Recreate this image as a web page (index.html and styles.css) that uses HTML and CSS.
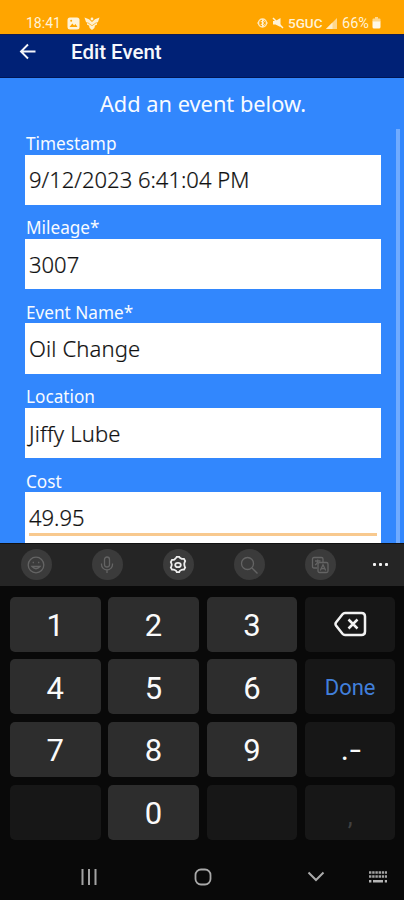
FILE: index.html
```html
<!DOCTYPE html>
<html lang="en">
<head>
<meta charset="utf-8">
<title>Edit Event</title>
<link rel="stylesheet" href="styles.css">
</head>
<body>
<div class="status">
  <div class="status-left">
    <span class="clock">18:41</span>
    <svg class="pic" width="13" height="13" viewBox="0 0 13 13"><rect x=".5" y=".5" width="12" height="12" rx="2.5" fill="#fff3d8"/><path d="M2.5 10l2.8-3.5 1.8 2 1.4-1.5 2 3z" fill="#ffa500"/><circle cx="4.2" cy="3.8" r="1" fill="#ffa500"/></svg>
    <svg class="bird" width="16" height="13" viewBox="0 0 16 13"><path d="M.5.5L5 2.300 8 5l3-2.700L15.500.5 14 5l-1.300.8.3 2-2 .8-.6 2.500L8 13l-2.400-1.900L5 8.600l-2-.8.300-2L2 5z" fill="#fff0cf"/><path d="M3.500 5.500L8 8.700l4.500-3.200" fill="none" stroke="#ffa500" stroke-width=".7"/><circle cx="8" cy="2" r="1.400" fill="#fff0cf"/></svg>
  </div>
  <div class="status-right">
    <svg width="11" height="12" viewBox="0 0 11 12"><circle cx="5.500" cy="6" r="4" fill="none" stroke="#ffe8bb" stroke-width="1.500"/><path d="M3.800 4l3.600 3.800-1.900 1.700v-7l1.900 1.700L3.800 8M.3 6h1M9.700 6h1" fill="none" stroke="#fff3d8"/></svg>
    <svg class="mute" width="12" height="12" viewBox="0 0 12 12"><path d="M1 4h2.500L8.500 1v9L3.500 7.500H1z" fill="#fff3d8"/><path d="M1 1l10 10" stroke="#fff3d8" stroke-width="1.500"/></svg>
    <span class="net">5GUC</span>
    <svg class="signal" width="12" height="11" viewBox="0 0 12 11"><path d="M0 11L11 0v11z" fill="#ffd78a"/><path d="M0 11l6.500-6.500V11z" fill="#ffedc8"/></svg>
    <span class="pct">66%</span>
    <svg class="battery" width="9" height="12" viewBox="0 0 9 12"><path d="M3 0h3v1.500h1.500q1 0 1 1V5h-8V2.500q0-1 1-1H3z" fill="#ffd88f"/><path d="M.5 4.500h8V10q0 1.500-1.500 1.500H2Q.5 11.500.5 10z" fill="#fff8e8"/></svg>
  </div>
</div>
<header class="appbar">
  <svg width="18" height="18" viewBox="0 0 18 18"><path d="M16.500 8.500H2M9 1.500l-7 7 7 7" fill="none" stroke="#f4f5fa" stroke-width="1.900"/></svg>
  <h1>Edit Event</h1>
</header>
<main class="content">
  <p class="intro"><span>Add an event below.</span></p>
  <form class="fields">
    <div class="field"><label>Timestamp</label><div class="input"><span>9/12/2023 6:41:04 PM</span></div></div>
    <div class="field"><label>Mileage*</label><div class="input"><span>3007</span></div></div>
    <div class="field"><label>Event Name*</label><div class="input"><span>Oil Change</span></div></div>
    <div class="field"><label>Location</label><div class="input"><span>Jiffy Lube</span></div></div>
    <div class="field"><label>Cost</label><div class="input active"><span>49.95</span></div></div>
  </form>
  <div class="scrollbar"></div>
</main>
<section class="keyboard">
  <div class="tools">
    <div class="tool"><svg viewBox="0 0 20 20"><circle cx="10" cy="10" r="7.800"/><path d="M6 11.500q4 4.500 8 0z"/><path d="M7.300 6.800v1.400M12.700 6.800v1.400"/></svg></div>
    <div class="tool"><svg viewBox="0 0 20 20"><rect x="7.500" y="2" width="5" height="10" rx="2.500"/><path d="M4.500 8.500v1a5.500 5.500 0 0 0 11 0v-1M10 15v3"/></svg></div>
    <div class="tool on"><svg viewBox="0 0 20 20"><path d="M8.100 2.800L8.800 1.800h2.400l.7 1 1.700 1 1.300.1h1.100l1.200 2.100-.5 1.200-.4 1.100v1.900l.4 1.100.5 1.200-1.200 2.100-1.300.1-1.100.1-1.700 1-.7 1.400H8.800l-.7-1.400-1.700-1-1.100-.1-1.300-.1-1.200-2.100.5-1.200.4-1.100V9.300l-.4-1.100L2.800 7 4 4.900l1.300-.1 1.100-.1z"/><ellipse cx="10" cy="10" rx="2.800" ry="2.200"/></svg></div>
    <div class="tool"><svg viewBox="0 0 20 20"><circle cx="8.500" cy="8.500" r="6"/><path d="M13 13l5.500 5.500"/></svg></div>
    <div class="tool"><svg viewBox="0 0 20 20"><path d="M7 13H4q-1.500 0-1.500-1.500V4Q2.500 2.500 4 2.500h7.500Q13 2.500 13 4v3M5 6h5.500M7.700 4.500V6q-.2 3-2.700 4"/><rect x="8" y="7.500" width="10" height="10" rx="1.500"/><path d="M10.300 15.500L13 9.800l2.700 5.700M11.300 13.700h3.400"/></svg></div>
    <div class="more"><i></i><i></i><i></i></div>
  </div>
  <div class="keys">
    <div class="key">1</div><div class="key">2</div><div class="key">3</div>
    <div class="key dark"><svg width="33" height="26" viewBox="0 0 33 26"><path d="M11 2h16.500Q31 2 31 5.500v15q0 3.500-3.500 3.500H11q-1.500 0-2.500-1.200L2 14.500q-1-1.500 0-3L8.500 3.200Q9.500 2 11 2z" fill="none" stroke="#f2f2f2" stroke-width="2.500"/><path d="M14.500 8.500l9 9M23.500 8.500l-9 9" stroke="#f2f2f2" stroke-width="2.500"/></svg></div>
    <div class="key">4</div><div class="key">5</div><div class="key">6</div><div class="key dark done">Done</div>
    <div class="key">7</div><div class="key">8</div><div class="key">9</div><div class="key dark punct"><span>.</span><span class="dash">-</span></div>
    <div class="key dark"></div><div class="key">0</div><div class="key dark"></div><div class="key dark comma">,</div>
  </div>
  <nav class="nav">
    <svg width="18" height="18" viewBox="0 0 18 18"><path d="M2.500 1v16M9 1v16M15.500 1v16" stroke="#a3a3a3" stroke-width="2"/></svg>
    <svg width="18" height="18" viewBox="0 0 18 18"><rect x="1.500" y="1.500" width="15" height="15" rx="5.500" fill="none" stroke="#a9a9a9" stroke-width="1.800"/></svg>
    <svg width="18" height="12" viewBox="0 0 18 12"><path d="M1.500 1.500L9 9l7.500-7.500" fill="none" stroke="#aaa" stroke-width="2"/></svg>
    <svg width="20" height="14" viewBox="0 0 20 14"><path d="M1 2.500h18M1 6.500h18" stroke="#a3a3a3" stroke-width="2.300" stroke-dasharray="2.400 .8"/><path d="M1 11.300h2.400M5 11.300h10M16.800 11.300H19" stroke="#b5b5b5" stroke-width="2.500"/></svg>
  </nav>
</section>
</body>
</html>
```
FILE: styles.css
```css
* { box-sizing: border-box; }
body { margin: 0; width: 404px; height: 900px; overflow: hidden; background: #090909; font-family: Roboto, "Liberation Sans", sans-serif; }
svg { display: block; flex: none; }
.status { height: 34px; background: #ffa500; display: flex; justify-content: space-between; padding: 13px 23px 0 26px; color: #fff3d8; font-size: 14px; line-height: 20px; }
.status-left, .status-right { display: flex; align-items: center; height: 20px; }
.clock { width: 41px; }
.bird { margin-left: 4px; }
.mute { margin-left: 4px; }
.net { margin-left: 4px; width: 38px; font-size: 13.500px; font-weight: 500; }
.pct { margin: 1px 0 0 4px; width: 30px; font-size: 14.500px; }
.appbar { height: 44px; background: #002176; border-top: 1px solid #141c52; border-bottom: 1px solid #001654; display: flex; align-items: center; padding: 0 0 8px 19px; }
.appbar h1 { margin: 0 0 0 34px; font-size: 20.500px; line-height: 26px; font-weight: 500; color: #f6f7fc; }
.content { position: relative; height: 465px; background: #3287fd; overflow: hidden; font-family: "Noto Sans", "Open Sans", sans-serif; color: #f8fbff; }
.intro { margin: 0; height: 54px; padding: 11px 0 0 2px; text-align: center; font-size: 21.800px; line-height: 30px; }
.fields { padding: 0 23px 0 25px; }
.field { height: 84.400px; }
.field label { display: block; height: 22.500px; padding-left: 1px; font-size: 17.200px; line-height: 23.400px; }
.input { height: 50.500px; background: #fff; color: #111; font-size: 22px; font-weight: 300; line-height: 50px; padding-left: 4px; -webkit-text-stroke: .2px #111; font-variant-ligatures: none; }
.field:nth-child(3) .input, .field:nth-child(4) .input { letter-spacing: .15px; }
.field:first-child .input { line-height: 49px; }
.input.active { position: relative; }
.input.active::after { content: ""; position: absolute; left: 4px; right: 4px; top: 41px; height: 3px; background: #f8c98e; }
.scrollbar { position: absolute; right: 4px; top: 51px; bottom: 0; width: 4px; background: #70abff; }
.tools { height: 43px; background: #252525; border-top: 1px solid #111; display: flex; align-items: center; padding: 0 0 1px 20.500px; gap: 40px; }
.tool { width: 31px; height: 31px; border-radius: 50%; background: #3b3b3b; display: flex; align-items: center; justify-content: center; }
.tool svg { width: 20px; height: 20px; fill: none; stroke: #646464; stroke-width: 1.300; }
.tool.on svg { stroke: #eee; stroke-width: 1.800; }
.more { display: flex; gap: 2.500px; margin-left: -3px; }
.more i { width: 3.500px; height: 3.500px; border-radius: 1px; background: #f4f4f4; }
.keys { display: grid; grid-template-columns: repeat(4, 90.500px); grid-auto-rows: 55.200px; gap: 7.500px 7.800px; padding: 10.500px 0 0 10px; }
.key { border-radius: 5px; background: #2d2d2d; color: #fafafa; display: flex; align-items: center; justify-content: center; font-size: 31px; padding-top: 3px; }
.key.dark { background: #171717; padding-top: 0; }
.key.done { color: #417fda; font-size: 22px; padding-top: 2px; }
.punct .dash { transform: scaleX(1.300); margin-left: 2px; }
.key.comma { color: #414141; font-size: 25px; padding-top: 8px; }
.nav { height: 60px; display: grid; grid-template-columns: 18px 18px 18px 20px; justify-content: start; align-items: center; padding: 14px 0 0 80px; column-gap: 95.500px; }
.nav svg:last-child { margin-left: -53px; }
```
